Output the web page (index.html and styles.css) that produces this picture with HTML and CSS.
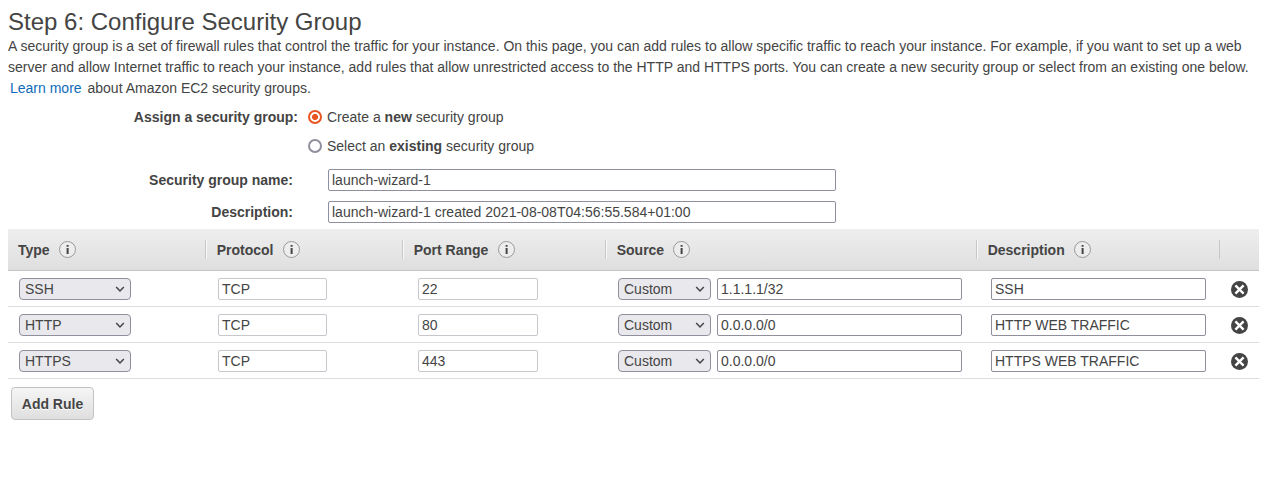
FILE: index.html
```html
<!DOCTYPE html>
<html lang="en">
<head>
<meta charset="utf-8">
<title>Configure Security Group</title>
<link rel="stylesheet" href="styles.css">
</head>
<body>
<svg width="0" height="0" class="defs">
  <symbol id="info" viewBox="0 0 17 17">
    <circle cx="8.5" cy="8.5" r="8" fill="#ededed" stroke="#999"/>
    <path d="M7.6 4h2v1.8h-2zM7.6 7h2v6h-2z" fill="#444"/>
  </symbol>
  <symbol id="remove" viewBox="0 0 17 17">
    <circle cx="8.5" cy="8.5" r="8.5" fill="#444"/>
    <path d="M4.4 4.4l8.2 8.2M12.6 4.4l-8.2 8.2" stroke="#fff" stroke-width="2.4"/>
  </symbol>
  <symbol id="chevron" viewBox="0 0 10 6">
    <path d="M1.2 1L5 4.9 8.800 1" fill="none" stroke="#444" stroke-width="1.5"/>
  </symbol>
</svg>
<h1 class="title">Step 6: Configure Security Group</h1>
<p class="intro">A security group is a set of firewall rules that control the traffic for your instance. On this page, you can add rules to allow specific traffic to reach your instance. For example, if you want to set up a web<br>server and allow Internet traffic to reach your instance, add rules that allow unrestricted access to the HTTP and HTTPS ports. You can create a new security group or select from an existing one below.<br><a class="link">Learn more</a> about Amazon EC2 security groups.</p>
<div class="assign">
  <div class="assign-label">Assign a security group:</div>
  <div class="options">
    <div class="option"><span class="radio checked"></span><span>Create a <b>new</b> security group</span></div>
    <div class="option"><span class="radio"></span><span>Select an <b>existing</b> security group</span></div>
  </div>
</div>
<div class="row-field"><div class="field-label">Security group name:</div><div class="input">launch-wizard-1</div></div>
<div class="row-field"><div class="field-label">Description:</div><div class="input">launch-wizard-1 created 2021-08-08T04:56:55.584+01:00</div></div>
<div class="grid head">
  <div class="th">Type<svg class="icon"><use href="#info"/></svg></div>
  <div class="th">Protocol<svg class="icon"><use href="#info"/></svg></div>
  <div class="th">Port Range<svg class="icon"><use href="#info"/></svg></div>
  <div class="th">Source<svg class="icon"><use href="#info"/></svg></div>
  <div class="th">Description<svg class="icon"><use href="#info"/></svg></div>
  <div class="th"></div>
</div>
<div class="grid rule">
  <div class="td type"><div class="select">SSH<svg class="chev"><use href="#chevron"/></svg></div></div>
  <div class="td protocol"><div class="input muted">TCP</div></div>
  <div class="td port"><div class="input muted">22</div></div>
  <div class="td source"><div class="select">Custom<svg class="chev"><use href="#chevron"/></svg></div><div class="input">1.1.1.1/32</div></div>
  <div class="td desc"><div class="input">SSH</div></div>
  <div class="td remove"><svg class="icon"><use href="#remove"/></svg></div>
</div>
<div class="grid rule">
  <div class="td type"><div class="select">HTTP<svg class="chev"><use href="#chevron"/></svg></div></div>
  <div class="td protocol"><div class="input muted">TCP</div></div>
  <div class="td port"><div class="input muted">80</div></div>
  <div class="td source"><div class="select">Custom<svg class="chev"><use href="#chevron"/></svg></div><div class="input">0.0.0.0/0</div></div>
  <div class="td desc"><div class="input">HTTP WEB TRAFFIC</div></div>
  <div class="td remove"><svg class="icon"><use href="#remove"/></svg></div>
</div>
<div class="grid rule">
  <div class="td type"><div class="select">HTTPS<svg class="chev"><use href="#chevron"/></svg></div></div>
  <div class="td protocol"><div class="input muted">TCP</div></div>
  <div class="td port"><div class="input muted">443</div></div>
  <div class="td source"><div class="select">Custom<svg class="chev"><use href="#chevron"/></svg></div><div class="input">0.0.0.0/0</div></div>
  <div class="td desc"><div class="input">HTTPS WEB TRAFFIC</div></div>
  <div class="td remove"><svg class="icon"><use href="#remove"/></svg></div>
</div>
<button class="add">Add Rule</button>
</body>
</html>
```
FILE: styles.css
```css
* { box-sizing: border-box; }
html { overflow: hidden; }
body {
  margin: 0;
  padding: 8px 6px 0 8px;
  background: #fff;
  color: #444;
  font: 14px/21px "Liberation Sans", Arial, sans-serif;
}
.defs { display: block; }
.title { margin: 0; font-size: 24px; line-height: 28px; font-weight: 400; }
.intro { margin: 0; white-space: nowrap; }
.link { color: #0f6cba; padding: 0 2px; }
.assign { display: flex; height: 65px; padding-top: 8px; }
.assign-label { width: 290px; text-align: right; font-weight: 700; }
.options { display: flex; flex-direction: column; gap: 8px; margin-left: 10px; }
.option { display: flex; align-items: center; gap: 5px; height: 21px; }
.radio { width: 14px; height: 14px; margin-bottom: 1px; border: 2px solid #8f8f9d; border-radius: 50%; background: #fff; }
.radio.checked { border-color: #e95420; background: radial-gradient(circle, #e95420 2.7px, #fff 3.4px); }
.row-field { display: flex; height: 32px; padding-top: 5px; }
.field-label { width: 285px; margin-right: 35px; line-height: 22px; text-align: right; font-weight: 700; }
.input {
  height: 22px;
  padding-left: 3px;
  border: 1px solid #8f8f9d;
  border-radius: 2px;
  background: #fff;
  line-height: 20px;
  white-space: nowrap;
}
.row-field .input { width: 508px; }
.input.muted { border-color: #c7c7ce; }
.grid { display: grid; grid-template-columns: 197px 197px 203px 371px 243px 40px; width: 1251px; }
.head {
  height: 42px;
  margin-top: 1px;
  align-items: center;
  background: linear-gradient(#eee, #dfdfdf);
  border-bottom: 1px solid #c4c4c4;
}
.th { display: flex; align-items: center; height: 19px; padding: 2px 0 0 10.7px; border-left: 1px solid #c8c8c8; box-shadow: inset 1px 0 #f8f8f8; line-height: 23px; font-weight: 700; }
.th:first-child { padding-left: 10px; border-left: 0; box-shadow: none; }
.th:last-child { box-shadow: none; }
.icon { width: 17px; height: 17px; flex: none; }
.th .icon { margin: 0 0 2px 9.3px; }
.rule { height: 36px; border-bottom: 1px solid #ddd; }
.td { display: flex; align-items: center; }
.type { padding-left: 11px; }
.type .select { width: 112px; }
.protocol { padding-left: 13px; }
.protocol .input { width: 109px; }
.port { padding-left: 16px; }
.port .input { width: 120px; }
.source { padding-left: 13px; gap: 6px; }
.source .select { width: 93px; }
.source .input { width: 245px; }
.desc { padding-left: 15px; }
.desc .input { width: 215px; }
.remove { padding: 1px 0 0 12px; }
.select {
  display: flex;
  align-items: center;
  justify-content: space-between;
  height: 22px;
  padding: 0 5px;
  border: 1px solid #8f8f9d;
  border-radius: 4px;
  background: #e9e9ed;
  line-height: 20px;
}
.chev { width: 10px; height: 6px; }
.add {
  display: block;
  width: 83px;
  height: 33px;
  margin: 8px 0 0 3px;
  padding: 1px 0 0;
  border: 1px solid #c3c3c3;
  border-radius: 4px;
  background: linear-gradient(#f5f5f5, #dfdfdf);
  color: #444;
  font: 700 14px/21px "Liberation Sans", Arial, sans-serif;
  text-shadow: 0 1px #fff;
}
```
